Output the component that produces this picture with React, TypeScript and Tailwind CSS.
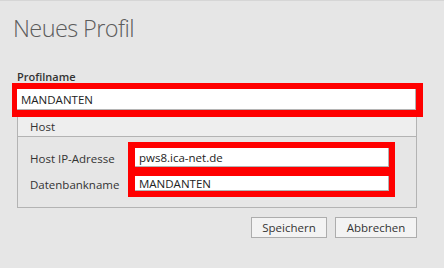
import React from 'react';

const Field: React.FC<{ value: string; className?: string }> = ({ value, className }) => (
  <div
    className={`bg-white border-r border-b border-[#b4b4b4] pl-[4px] text-[11.5px] text-[#222] whitespace-nowrap overflow-hidden ${className ?? ''}`}
  >
    {value}
  </div>
);

const Button: React.FC<{ label: string; width: string }> = ({ label, width }) => (
  <button
    className={`${width} h-[21px] bg-[#f3f3f3] border border-[#adadad] text-[11.5px] leading-[19px] text-[#333]`}
  >
    {label}
  </button>
);

const App: React.FC = () => {
  return (
    <div className="w-[444px] h-[268px] bg-[#e6e6e6] border-t border-[#d6d6d6] font-['Open_Sans',sans-serif] text-[#333] overflow-hidden">
      <h1 className="pl-[13px] pt-[11px] h-[40px] text-[23.5px] font-light leading-[32px] tracking-[-0.6px] text-[#5c5c5c]">
        Neues Profil
      </h1>

      <div className="mt-[30px] pl-[17px] text-[11px] font-semibold leading-[12px] text-[#333]">
        Profilname
      </div>

      <div className="ml-[12px] w-[411px] border-t-[6px] border-b-[7px] border-l-[5px] border-r-[7px] border-[#ff0000]">
        <Field value="MANDANTEN" className="h-[21px] leading-[21px]" />
      </div>

      <div className="ml-[17px] w-[400px] border-x border-b border-[#b3b3b3]">
        <div className="h-[20px] pl-[12px] bg-[#eeeeee] border-b border-[#b3b3b3] text-[11.5px] leading-[19px]">
          Host
        </div>
        <div className="flex pl-[12px] pt-[5px] pb-[10px]">
          <div className="w-[98px] flex flex-col text-[11.5px] pt-[8px] gap-[8px]">
            <span className="leading-[18px]">Host IP-Adresse</span>
            <span className="leading-[18px]">Datenbankname</span>
          </div>
          <div className="w-[267px] flex flex-col gap-[9px] bg-[#ff0000] pt-[6px] pb-[6px] pl-[7px] pr-[6px]">
            <Field value="pws8.ica-net.de" className="h-[19px] leading-[19px]" />
            <Field value="MANDANTEN" className="h-[15px] leading-[15px]" />
          </div>
        </div>
      </div>

      <div className="w-[417px] flex justify-end gap-[8px] mt-[9px]">
        <Button label="Speichern" width="w-[76px]" />
        <Button label="Abbrechen" width="w-[82px]" />
      </div>
    </div>
  );
};

export default App;
